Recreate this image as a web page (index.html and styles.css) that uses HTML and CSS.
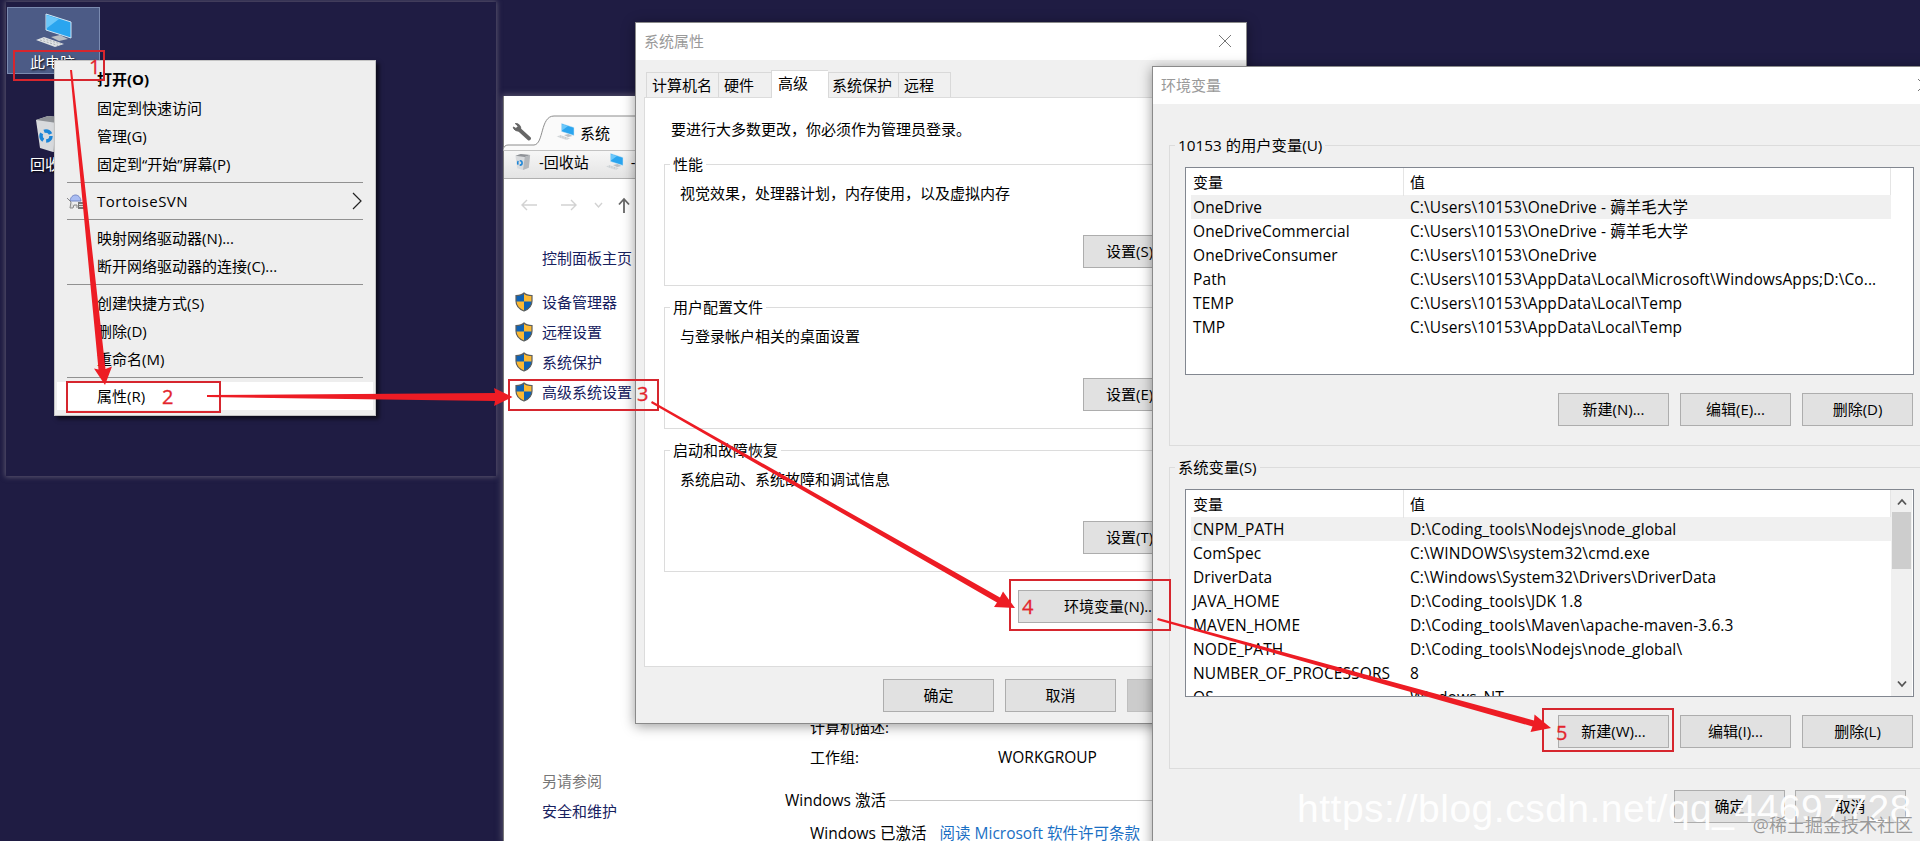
FILE: index.html
```
<!DOCTYPE html>
<html lang="zh-CN">
<head>
	<meta charset="utf-8">
	<meta name="viewport" content="width=device-width">
	<title>环境变量</title>
	<link rel="stylesheet" href="styles.css">
</head>
<body>
	<!-- shared icons -->
	<svg class="defs" width="0" height="0">
		<symbol id="pc" viewBox="0 0 38 36">
			<path d="M11 1 L36 9 V25 L11 17 Z" fill="#2aa5ef" stroke="#cfe6f5" stroke-width="1"/>
			<path d="M12 2.300 L24 6 L12 15 Z" fill="#6cc8fa"/>
			<path d="M16 24 L25 22 L33 26 L24 28 Z" fill="#b9bec4"/>
			<path d="M1 27 L9 24 L29 31 L20 34 Z" fill="#dfe2e4"/>
			<path d="M5 27 L23 32.500 M8 25.600 L26 31" stroke="#9ca3a8" stroke-width=".8" stroke-dasharray="2 1.500"/>
		</symbol>
		<symbol id="bin" viewBox="0 0 36 38">
			<path d="M1 5 L13 1 L34 3 L31 32 L18 37 L5 33 Z" fill="#d8dadd"/>
			<path d="M1 5 L13 1 L34 3 L22 8 Z" fill="#8f9297"/>
			<path d="M22 8 L34 3 L31 32 L18 37 Z" fill="#b4b7bb"/>
			<circle cx="11" cy="21" r="5" fill="none" stroke="#1c86d8" stroke-width="3.500" stroke-dasharray="7.500 3"/>
		</symbol>
		<symbol id="shield" viewBox="0 0 18 20">
			<path d="M9 1 C7 3 4 3.500 1 3.500 V9 C1 14 4 17 9 19 C14 17 17 14 17 9 V3.500 C14 3.500 11 3 9 1 Z" fill="#fdb932"/>
			<path d="M9 1 C7 3 4 3.500 1 3.500 V9.500 H9 Z" fill="#0f62b4"/>
			<path d="M9 9.500 H17 C16.500 14 14 17 9 19 Z" fill="#0f62b4"/>
			<path d="M9 1 C7 3 4 3.500 1 3.500 V9 C1 14 4 17 9 19 C14 17 17 14 17 9 V3.500 C14 3.500 11 3 9 1 Z" fill="none" stroke="#5b5f60" stroke-width="1.200"/>
		</symbol>
	</svg>

	<section class="desktop">
		<div class="shortcut selected">
			<svg width="38" height="36"><use href="#pc"/></svg>
			<span>此电脑</span>
		</div>
		<div class="shortcut">
			<svg width="36" height="38"><use href="#bin"/></svg>
			<span>回收站</span>
		</div>
	</section>

	<ul class="menu">
		<li class="default">打开(O)</li>
		<li>固定到快速访问</li>
		<li>管理(G)</li>
		<li>固定到“开始”屏幕(P)</li>
		<li class="sep"></li>
		<li class="sub">
			<svg width="17" height="17" viewBox="0 0 17 17">
				<path d="M3 8 C4 0 13 0 14 8 Z" fill="#a9bdf3" stroke="#7184c2"/>
				<path d="M0 5 L4 9 L3 15 H6 L7 12 H10 V15" fill="#ddd" stroke="#888"/>
				<rect x="11" y="9" width="6" height="7" fill="#777"/>
				<path d="M12 11.500 H16 M12 13.500 H16" stroke="#ddd"/>
			</svg>
			TortoiseSVN
			<svg class="chevron" width="10" height="18" viewBox="0 0 10 18"><path d="M1 1 L9 9 L1 17" fill="none" stroke="#222" stroke-width="1.200"/></svg>
		</li>
		<li class="sep"></li>
		<li>映射网络驱动器(N)...</li>
		<li>断开网络驱动器的连接(C)...</li>
		<li class="sep"></li>
		<li>创建快捷方式(S)</li>
		<li>删除(D)</li>
		<li>重命名(M)</li>
		<li class="sep"></li>
		<li class="hover">属性(R)</li>
	</ul>

	<section class="explorer">
		<div class="tabbar">
			<svg class="wrench" width="19" height="19" viewBox="0 0 19 19">
				<path d="M6 6.500 L17 16.500" stroke="#666" stroke-width="3.800" stroke-linecap="round"/>
				<path d="M3.300 1.600 L6.300 4.200 L4.600 6.800 L1.200 5 A4.700 4.700 0 0 0 8.200 8.400 A4.700 4.700 0 0 0 3.300 1.600" fill="#666" stroke="#666"/>
			</svg>
			<svg class="tab-edge" width="144" height="36" viewBox="0 0 144 36">
				<path d="M0 35 Q1 30 5 30 H31 C41 29 37 1 51 1 H144 V36 H0 Z" fill="#fafafa" stroke="#8c8c8c"/>
			</svg>
			<div class="tab-label">
				<svg width="19" height="18"><use href="#pc"/></svg>
				<span>系统</span>
			</div>
		</div>
		<div class="bookmarks">
			<svg width="16" height="18"><use href="#bin"/></svg>
			<span>-回收站</span>
			<svg width="21" height="18"><use href="#pc"/></svg>
			<span>-</span>
		</div>
		<svg class="nav" width="120" height="18" viewBox="0 0 120 18" fill="none">
			<path d="M17 9 H2 M7 4 L2 9 L7 14 M41 9 H56 M51 4 L56 9 L51 14 M75 7 L78.500 11 L82 7" stroke="#d2d2d2" stroke-width="1.400"/>
			<path d="M104 17 V3 M99 8.500 L104 3 L109 8.500" stroke="#666" stroke-width="1.800"/>
		</svg>
		<div class="columns">
			<div class="side">
				<p class="home">控制面板主页</p>
				<p><svg width="18" height="20"><use href="#shield"/></svg>设备管理器</p>
				<p><svg width="18" height="20"><use href="#shield"/></svg>远程设置</p>
				<p><svg width="18" height="20"><use href="#shield"/></svg>系统保护</p>
				<p><svg width="18" height="20"><use href="#shield"/></svg>高级系统设置</p>
				<div class="also">
					<p class="muted">另请参阅</p>
					<p>安全和维护</p>
				</div>
			</div>
			<div class="info">
				<dl>
					<dt>计算机描述:</dt><dd></dd>
					<dt>工作组:</dt><dd>WORKGROUP</dd>
				</dl>
				<h2>Windows 激活</h2>
				<p>Windows 已激活 <a>阅读 Microsoft 软件许可条款</a></p>
			</div>
		</div>
	</section>

	<section class="window props">
		<header>
			<span>系统属性</span>
			<svg width="14" height="14" viewBox="0 0 14 14"><path d="M1 1 L13 13 M13 1 L1 13" stroke="#777"/></svg>
		</header>
		<div class="tabs">
			<div class="tab t1">计算机名</div>
			<div class="tab t2">硬件</div>
			<div class="tab t3 active">高级</div>
			<div class="tab t4">系统保护</div>
			<div class="tab t5">远程</div>
		</div>
		<div class="pane">
			<p>要进行大多数更改，你必须作为管理员登录。</p>
			<fieldset>
				<legend>性能</legend>
				<p>视觉效果，处理器计划，内存使用，以及虚拟内存</p>
				<button>设置(S)...</button>
			</fieldset>
			<fieldset>
				<legend>用户配置文件</legend>
				<p>与登录帐户相关的桌面设置</p>
				<button>设置(E)...</button>
			</fieldset>
			<fieldset>
				<legend>启动和故障恢复</legend>
				<p>系统启动、系统故障和调试信息</p>
				<button>设置(T)...</button>
			</fieldset>
			<button class="env-button">环境变量(N)...</button>
		</div>
		<div class="actions">
			<button>确定</button>
			<button>取消</button>
			<button class="disabled"></button>
		</div>
	</section>

	<section class="window env">
		<header>
			<span>环境变量</span>
			<svg width="14" height="14" viewBox="0 0 14 14"><path d="M1 1 L13 13 M13 1 L1 13" stroke="#777"/></svg>
		</header>
		<fieldset>
			<legend>10153 的用户变量(U)</legend>
			<div class="list">
				<div class="row head"><span>变量</span><span>值</span></div>
				<div class="row current"><span>OneDrive</span><span>C:\Users\10153\OneDrive - 薅羊毛大学</span></div>
				<div class="row"><span>OneDriveCommercial</span><span>C:\Users\10153\OneDrive - 薅羊毛大学</span></div>
				<div class="row"><span>OneDriveConsumer</span><span>C:\Users\10153\OneDrive</span></div>
				<div class="row"><span>Path</span><span>C:\Users\10153\AppData\Local\Microsoft\WindowsApps;D:\Co...</span></div>
				<div class="row"><span>TEMP</span><span>C:\Users\10153\AppData\Local\Temp</span></div>
				<div class="row"><span>TMP</span><span>C:\Users\10153\AppData\Local\Temp</span></div>
			</div>
			<div class="buttons">
				<button>新建(N)...</button>
				<button>编辑(E)...</button>
				<button>删除(D)</button>
			</div>
		</fieldset>
		<fieldset class="system">
			<legend>系统变量(S)</legend>
			<div class="list">
				<div class="row head"><span>变量</span><span>值</span></div>
				<div class="row current"><span>CNPM_PATH</span><span>D:\Coding_tools\Nodejs\node_global</span></div>
				<div class="row"><span>ComSpec</span><span>C:\WINDOWS\system32\cmd.exe</span></div>
				<div class="row"><span>DriverData</span><span>C:\Windows\System32\Drivers\DriverData</span></div>
				<div class="row"><span>JAVA_HOME</span><span>D:\Coding_tools\JDK 1.8</span></div>
				<div class="row"><span>MAVEN_HOME</span><span>D:\Coding_tools\Maven\apache-maven-3.6.3</span></div>
				<div class="row"><span>NODE_PATH</span><span>D:\Coding_tools\Nodejs\node_global\</span></div>
				<div class="row"><span>NUMBER_OF_PROCESSORS</span><span>8</span></div>
				<div class="row"><span>OS</span><span>Windows_NT</span></div>
				<div class="scrollbar">
					<svg width="10" height="8" viewBox="0 0 10 8"><path d="M1 6.500 L5 2 L9 6.500" fill="none" stroke="#555" stroke-width="1.800"/></svg>
					<div class="thumb"></div>
					<svg width="10" height="8" viewBox="0 0 10 8"><path d="M1 1.500 L5 6 L9 1.500" fill="none" stroke="#555" stroke-width="1.800"/></svg>
				</div>
			</div>
			<div class="buttons">
				<button>新建(W)...</button>
				<button>编辑(I)...</button>
				<button>删除(L)</button>
			</div>
		</fieldset>
		<div class="actions">
			<button>确定</button>
			<button>取消</button>
		</div>
	</section>

	<!-- numbered steps -->
	<svg class="steps" width="1920" height="841" viewBox="0 0 1920 841">
		<g fill="none" stroke="#d6262e" stroke-width="2">
			<rect x="14" y="51" width="90" height="29"/>
			<rect x="67" y="382" width="153" height="30"/>
			<rect x="509" y="380" width="149" height="30"/>
			<rect x="1010" y="580" width="160" height="50"/>
			<rect x="1543" y="709" width="130" height="42"/>
		</g>
		<g fill="#ed1c24">
			<path d="M70 70 L72 70 L105.500 369 L112 366.500 L105 385 L94 368.500 L98.500 369.500 Z"/>
			<path d="M207 395 L495 393 L494 388 L512.500 397 L494 406 L495 401 L207 397 Z"/>
			<path d="M652 401 L1000 597.500 L1003 591.500 L1015 608 L994 607 L997 602.500 L651 403 Z"/>
			<path d="M1158 618 L1534 720.500 L1534.500 714.500 L1551 728 L1530.500 732 L1532.500 726.500 L1157 620 Z"/>
		</g>
		<g class="digits">
			<text x="89" y="74">1</text>
			<text x="162" y="404">2</text>
			<text x="637" y="401">3</text>
			<text x="1022" y="614">4</text>
			<text x="1556" y="740">5</text>
		</g>
	</svg>

	<div class="mark csdn">https://blog.csdn.net/qq_44697728</div>
	<div class="mark juejin">@稀土掘金技术社区</div>
</body>
</html>
```
FILE: styles.css
```
* {
	box-sizing: border-box;
}

body {
	position: relative;
	width: 1920px;
	height: 841px;
	margin: 0;
	overflow: hidden;
	background-color: #1f1c43;
	color: #000;
	font: 15px/20px "Open Sans", "Noto Sans CJK SC", sans-serif;
	white-space: nowrap;
}

p, ul, dl, dd, h2 {
	margin: 0;
	padding: 0;
	font-size: inherit;
	font-weight: normal;
}

svg {
	flex: none;
}

.defs {
	position: absolute;
}

button {
	flex: none;
	width: 111px;
	height: 33px;
	padding: 0 0 2px;
	border: 1px solid #adadad;
	background-color: #e1e1e1;
	color: #000;
	font: inherit;
}

/* desktop */

.desktop {
	position: absolute;
	left: 6px;
	top: 2px;
	width: 490px;
	height: 474px;
	padding: 5px 0 0 1px;
	box-shadow: 0 0 5px 1px #5a566e;
	background-color: #1f1c43;
}

.shortcut {
	display: flex;
	flex-direction: column;
	align-items: center;
	width: 91px;
	height: 67px;
	margin-bottom: 35px;
	padding-top: 5px;
	border: 1px solid transparent;
	color: #fff;
	text-shadow: 1px 1px 2px #000;
}

.shortcut svg {
	margin-bottom: 1px;
}

.shortcut.selected {
	width: 93px;
	padding-right: 2px;
	border-color: #7b8bb0;
	background-color: #4c5b86;
}

.shortcut.selected svg {
	margin: 0 0 3px 3px;
}

.menu {
	position: absolute;
	left: 54px;
	top: 60px;
	width: 322px;
	height: 356px;
	padding: 5px 2px;
	border: 1px solid #c4c4c4;
	background-color: #eee;
	box-shadow: 3px 3px 4px rgba(0, 0, 0, .6);
	list-style: none;
}

.menu li {
	height: 28px;
	padding-left: 40px;
	line-height: 28px;
}

.menu .default {
	font-weight: bold;
	line-height: 26px;
}

.menu .sep {
	height: 9px;
	margin: 0 10px;
	padding: 0;
	border-top: 4px solid #eee;
	background: linear-gradient(#919191 1px, #eee 1px);
}

.menu .sub {
	display: flex;
	align-items: center;
	gap: 13px;
	padding-left: 10px;
	letter-spacing: .5px;
}

.menu .chevron {
	margin-left: auto;
	margin-right: 11px;
}

.menu .hover {
	background-color: #fff;
}

/* explorer */

.explorer {
	position: absolute;
	left: 503px;
	top: 96px;
	width: 699px;
	height: 745px;
	border-left: 1px solid #777;
	box-shadow: 0 0 6px 1px #5a566e;
	background-color: #fff;
}

.tabbar {
	display: flex;
	height: 50px;
	padding-top: 19px;
}

.wrench {
	margin: 7px -28px 0 8px;
}

.tab-edge {
	width: 144px;
}

.tab-label {
	display: flex;
	gap: 5px;
	margin-left: -91px;
	padding-top: 8px;
}

.bookmarks {
	display: flex;
	align-items: center;
	height: 33px;
	padding-left: 11px;
	border-bottom: 1px solid #b0b0b0;
	background: linear-gradient(#fafafa, #e4e4e4);
}

.bookmarks span {
	margin: 0 15px 0 8px;
}

.bookmarks span:last-child {
	margin-left: 6px;
}

.nav {
	display: block;
	margin: 17px 0 0 16px;
}

.columns {
	display: flex;
}

.side {
	width: 281px;
	padding: 29px 0 0 11px;
	color: #17215f;
}

.side p {
	display: flex;
	align-items: center;
	gap: 9px;
	height: 30px;
}

.side .home {
	margin-bottom: 14px;
	padding-left: 27px;
}

.also {
	padding: 359px 0 0 27px;
}

.also .muted {
	color: #777;
}

.info {
	width: 400px;
	padding-top: 503px;
	font-size: 15.500px;
}

.info dl {
	display: grid;
	grid-template-columns: 188px auto;
	row-gap: 10px;
	padding-left: 25px;
}

.info dt {
	font-size: 15px;
}

.info h2 {
	display: flex;
	align-items: center;
	gap: 3px;
	margin: 23px 0 13px;
}

.info h2::after {
	content: "";
	flex: 1;
	height: 1px;
	background-color: #c8c8c8;
}

.info p {
	padding-left: 25px;
}

.info a {
	margin-left: 9px;
	color: #1a6fc4;
}

/* dialogs */

.window {
	position: absolute;
	border: 1px solid #8a8a8a;
	background-color: #f0f0f0;
	box-shadow: 0 2px 12px rgba(0, 0, 0, .4);
}

.window header {
	display: flex;
	align-items: center;
	justify-content: space-between;
	height: 37px;
	padding: 0 14px 2px 8px;
	background-color: #fff;
	color: #999;
}

fieldset {
	margin: 0;
	padding: 0;
	border: 1px solid #dcdcdc;
	min-width: 0;
}

legend {
	margin-left: 5px;
	padding: 0 3px;
}

.props {
	left: 635px;
	top: 22px;
	width: 612px;
	height: 702px;
}

.tabs {
	display: flex;
	align-items: flex-end;
	height: 37px;
	margin-left: 10px;
}

.tab {
	height: 25px;
	padding-left: 5px;
	border: 1px solid #d9d9d9;
	border-width: 1px 0 0 1px;
	line-height: 24px;
}

.tab.active {
	height: 28px;
	margin-bottom: -1px;
	padding-left: 6px;
	background-color: #fff;
	line-height: 24px;
	z-index: 1;
}

.t1 { width: 72px; }
.t2 { width: 53px; }
.t3 { width: 57px; }
.t4 { width: 70px; }
.t5 { width: 53px; border-right-width: 1px; }

.tab.t4 {
	padding-left: 3px;
}

.pane {
	width: 594px;
	height: 570px;
	margin-left: 8px;
	padding: 21px 0 0 19px;
	border: 1px solid #dcdcdc;
	background-color: #fff;
}

.pane > p {
	padding-left: 7px;
}

.pane fieldset {
	width: 566px;
	height: 132px;
	margin-bottom: 11px;
}

.pane > p + fieldset {
	margin-top: 15px;
}

.pane fieldset p {
	padding: 9px 0 0 15px;
}

.pane fieldset button {
	margin: 32px 0 0 418px;
	padding-right: 6px;
}

.env-button {
	width: 184px;
	margin: 7px 0 0 354px;
}

.props .actions {
	display: flex;
	gap: 11px;
	padding: 12px 0 0 247px;
}

.props .disabled {
	border-color: #bfbfbf;
	background-color: #ccc;
}

.env {
	left: 1152px;
	top: 66px;
	width: 790px;
	height: 800px;
}

.env header {
	padding-right: 10px;
}

.env fieldset {
	width: 760px;
	height: 311px;
	margin: 31px 0 0 16px;
	padding-left: 15px;
}

.env .system {
	height: 312px;
	margin-top: 11px;
}

.env legend {
	margin-left: -10px;
	font-size: 15.300px;
}

.list {
	position: relative;
	width: 729px;
	height: 208px;
	margin-top: 12px;
	padding-left: 5px;
	border: 1px solid #828790;
	overflow: hidden;
	background-color: #fff;
}

.row {
	display: grid;
	grid-template-columns: 212px 1fr;
	width: 700px;
	height: 24px;
	font-size: 15.500px;
	line-height: 24px;
	letter-spacing: .1px;
}

.row span {
	padding-left: 2px;
}

.row span + span {
	padding-left: 7px;
}

.row.head {
	height: 27px;
	border-right: 1px solid #e5e5e5;
	font-size: 15px;
	line-height: 28px;
}

.row.head span + span {
	padding-left: 6px;
	border-left: 1px solid #e5e5e5;
}

.row.current {
	background-color: #f0f0f0;
}

.scrollbar {
	position: absolute;
	top: 0;
	right: 1px;
	display: flex;
	flex-direction: column;
	align-items: center;
	width: 21px;
	height: 206px;
	padding: 8px 0;
	background-color: #f0f0f0;
}

.thumb {
	width: 19px;
	height: 57px;
	margin: 6px 0 auto;
	background-color: #cdcdcd;
}

.buttons {
	display: flex;
	gap: 11px;
	justify-content: flex-end;
	width: 728px;
	margin-top: 18px;
}

.env .actions {
	display: flex;
	gap: 10px;
	padding: 21px 0 0 521px;
}

/* overlays */

.steps {
	position: absolute;
	left: 0;
	top: 0;
}

.digits {
	fill: #e3242c;
	stroke: #e3242c;
	stroke-width: .3px;
	font-size: 20px;
}

.mark {
	position: absolute;
}

.csdn {
	right: 8px;
	bottom: 11px;
	color: rgba(255, 255, 255, .95);
	font: 39px/42px "Liberation Sans", sans-serif;
	letter-spacing: .5px;
}

.juejin {
	right: 7px;
	bottom: 4px;
	color: #999;
	font-size: 18px;
	line-height: 24px;
	text-shadow: 0 0 1px #fff;
}
```
